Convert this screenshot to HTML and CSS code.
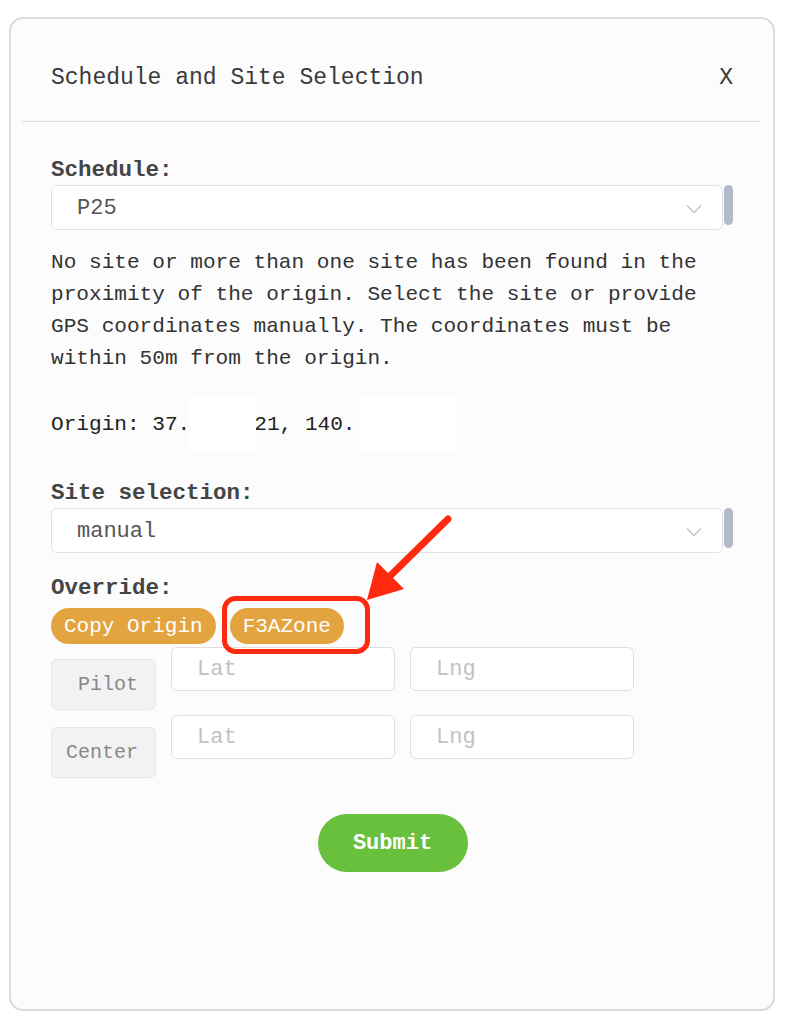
FILE: index.html
```html
<!DOCTYPE html>
<html lang="en">
<head>
<meta charset="utf-8">
<title>Schedule and Site Selection</title>
<link rel="stylesheet" href="styles.css">
</head>
<body>
<div class="card">
  <div class="header">
    <span class="title">Schedule and Site Selection</span>
    <span class="close">X</span>
  </div>
  <div class="divider"></div>
  <div class="content">
    <div class="label">Schedule:</div>
    <div class="select-row">
      <div class="select">
        <span>P25</span>
        <svg class="chev" width="16" height="10" viewBox="0 0 16 10"><path d="M1 1.5 L8 8.5 L15 1.5" fill="none" stroke="#c4c4c4" stroke-width="1.4"/></svg>
      </div>
      <div class="thumb"></div>
    </div>
    <p class="info">No site or more than one site has been found in the proximity of the origin. Select the site or provide GPS coordinates manually. The coordinates must be within 50m from the origin.</p>
    <div class="origin">Origin: 37.<span class="mask m1"></span>21, 140.<span class="mask m2"></span></div>
    <div class="label label-site">Site selection:</div>
    <div class="select-row">
      <div class="select">
        <span>manual</span>
        <svg class="chev" width="16" height="10" viewBox="0 0 16 10"><path d="M1 1.5 L8 8.5 L15 1.5" fill="none" stroke="#c4c4c4" stroke-width="1.4"/></svg>
      </div>
      <div class="thumb"></div>
    </div>
    <div class="label label-override">Override:</div>
    <div class="pill-row">
      <button class="pill">Copy Origin</button>
      <button class="pill">F3AZone</button>
    </div>
    <div class="coord-row">
      <div class="tag">Pilot</div>
      <input class="field" placeholder="Lat">
      <input class="field" placeholder="Lng">
    </div>
    <div class="coord-row">
      <div class="tag">Center</div>
      <input class="field" placeholder="Lat">
      <input class="field" placeholder="Lng">
    </div>
    <div class="submit-row">
      <button class="submit">Submit</button>
    </div>
  </div>
</div>
<svg class="annot" width="787" height="1024" viewBox="0 0 787 1024">
  <rect x="224.5" y="598.5" width="143" height="53" rx="11" fill="none" stroke="#ff2a0e" stroke-width="5"/>
  <line x1="448" y1="519" x2="388" y2="578" stroke="#ff2a0e" stroke-width="7" stroke-linecap="round"/>
  <polygon points="367,600 377,562 404,589" fill="#ff2a0e"/>
</svg>
</body>
</html>
```
FILE: styles.css
```css
* { box-sizing: border-box; }
html, body { margin: 0; padding: 0; background: #ffffff; }
body {
  width: 787px;
  height: 1024px;
  position: relative;
  font-family: "Liberation Mono", "DejaVu Sans Mono", monospace;
  color: #333;
}
.card {
  margin: 17px 0 0 9px;
  width: 766px;
  height: 994px;
  border: 2px solid #dcdcdc;
  border-radius: 14px;
  background: #fcfcfc;
}
.header {
  height: 102px;
  padding: 15px 40px 0 40px;
  display: flex;
  align-items: center;
  justify-content: space-between;
}
.title { font-size: 23px; color: #3a3a3a; }
.close { font-size: 23px; color: #3a3a3a; }
.divider {
  height: 1px;
  background: #dcdcdc;
  margin: 0 13px 0 11px;
}
.content {
  padding: 33px 0 0 40px;
  display: flex;
  flex-direction: column;
}
.label {
  font-size: 22.5px;
  font-weight: bold;
  color: #444;
  line-height: 30px;
  height: 30px;
}
.select-row {
  display: flex;
  align-items: flex-start;
  margin-top: 0;
}
.select {
  width: 672px;
  height: 45px;
  border: 1.5px solid #e2e2e4;
  border-radius: 6px;
  background: #fff;
  display: flex;
  align-items: center;
  justify-content: space-between;
  padding: 2px 20px 0 25px;
  font-size: 22px;
  color: #555;
}
.chev { margin-top: 0; }
.thumb {
  width: 9px;
  height: 40px;
  margin-left: 1px;
  border-radius: 5px;
  background: #b3bbca;
}
.info {
  margin: 16px 0 0 0;
  width: 690px;
  font-size: 21.1px;
  line-height: 32px;
  color: #333;
}
.origin {
  margin-top: 34px;
  font-size: 21.1px;
  line-height: 32px;
  color: #222;
  white-space: nowrap;
}
.mask {
  display: inline-block;
  vertical-align: middle;
  height: 58px;
  margin: -13px 0;
  background: #ffffff;
  position: relative;
}
.m1 { width: 66px; margin-right: -2px; }
.m2 { width: 96px; margin-left: 4px; }
.label-site { margin-top: 38px; }
.label-override { margin-top: 20px; }
.pill-row {
  display: flex;
  gap: 14px;
  margin-top: 5px;
}
.pill {
  height: 36px;
  border: none;
  border-radius: 18px;
  background: #e3a43f;
  color: #fff;
  font-family: inherit;
  font-size: 21px;
  padding: 0 13px;
  font-weight: normal;
}
.coord-row {
  display: flex;
  gap: 15px;
  align-items: flex-start;
  margin-top: 3px;
}
.coord-row + .coord-row { margin-top: 5px; }
.tag {
  width: 105px;
  height: 51px;
  margin-top: 12px;
  background: #f2f2f4;
  border: 1.5px solid #e6e6e8;
  border-radius: 6px;
  display: flex;
  align-items: center;
  justify-content: flex-end;
  padding-right: 17px;
  font-size: 20px;
  color: #888;
}
.field {
  width: 224px;
  height: 44px;
  border: 1.5px solid #dedee2;
  border-radius: 6px;
  background: #fff;
  padding: 0 0 0 25px;
  font-family: inherit;
  font-size: 22px;
  color: #333;
  outline: none;
}
.field::placeholder { color: #c2c2c2; }
.submit-row {
  display: flex;
  justify-content: center;
  width: 683px;
  margin-top: 36px;
}
.submit {
  width: 150px;
  height: 58px;
  border: none;
  border-radius: 29px;
  background: #68c03c;
  color: #fff;
  font-family: inherit;
  font-size: 22px;
  font-weight: bold;
}
.annot {
  position: absolute;
  left: 0;
  top: 0;
  pointer-events: none;
}
```
